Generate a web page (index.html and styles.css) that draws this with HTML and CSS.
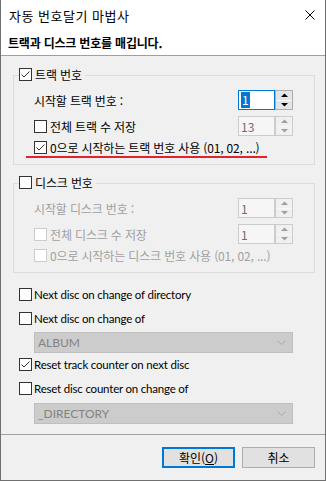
FILE: index.html
```html
<!DOCTYPE html>
<html lang="ko">
<head>
    <meta charset="UTF-8">
    <title>자동 번호달기 마법사</title>
    <link rel="stylesheet" href="styles.css">
</head>
<body>
<div class="window">
    <div class="titlebar">
        <span class="title">자동 번호달기 마법사</span>
        <svg class="close" width="10" height="10" viewBox="0 0 10 10"><path d="M0.5 0.5 L9.5 9.5 M9.5 0.5 L0.5 9.5" stroke="#000" stroke-width="1" fill="none"/></svg>
    </div>
    <div class="header">트랙과 디스크 번호를 매깁니다.</div>

    <div class="content">
        <div class="group">
            <div class="group-title">
                <span class="cb"><svg width="11" height="11" viewBox="0 0 11 11"><path d="M1.5 5.5 L4 8 L9.5 2.5" stroke="#333" fill="none"/></svg></span>트랙 번호
            </div>
            <div class="row first">
                <span>시작할 트랙 번호 :</span>
                <div class="spin focus">
                    <span class="spin-val"><span class="sel">1</span></span>
                    <span class="spin-btns">
                        <span class="spin-btn"><svg width="7" height="4" viewBox="0 0 7 4"><path d="M0 4 L3.5 0.5 L7 4 Z"/></svg></span>
                        <span class="spin-btn"><svg width="7" height="4" viewBox="0 0 7 4"><path d="M0 0 L3.5 3.5 L7 0 Z"/></svg></span>
                    </span>
                </div>
            </div>
            <div class="row">
                <span class="check"><span class="cb"></span>전체 트랙 수 저장</span>
                <div class="spin disabled">
                    <span class="spin-val">13</span>
                    <span class="spin-btns">
                        <span class="spin-btn"><svg width="7" height="4" viewBox="0 0 7 4"><path d="M0 4 L3.5 0.5 L7 4 Z"/></svg></span>
                        <span class="spin-btn"><svg width="7" height="4" viewBox="0 0 7 4"><path d="M0 0 L3.5 3.5 L7 0 Z"/></svg></span>
                    </span>
                </div>
            </div>
            <div class="row short">
                <span class="check"><span class="cb"><svg width="11" height="11" viewBox="0 0 11 11"><path d="M1.5 5.5 L4 8 L9.5 2.5" stroke="#333" fill="none"/></svg></span>0으로 시작하는 트랙 번호 사용 (01, 02, ...)</span>
            </div>
            <div class="mark"></div>
        </div>

        <div class="group second">
            <div class="group-title">
                <span class="cb"></span>디스크 번호
            </div>
            <div class="row first off">
                <span>시작할 디스크 번호 :</span>
                <div class="spin disabled">
                    <span class="spin-val">1</span>
                    <span class="spin-btns">
                        <span class="spin-btn"><svg width="7" height="4" viewBox="0 0 7 4"><path d="M0 4 L3.5 0.5 L7 4 Z"/></svg></span>
                        <span class="spin-btn"><svg width="7" height="4" viewBox="0 0 7 4"><path d="M0 0 L3.5 3.5 L7 0 Z"/></svg></span>
                    </span>
                </div>
            </div>
            <div class="row off">
                <span class="check"><span class="cb"></span>전체 디스크 수 저장</span>
                <div class="spin disabled">
                    <span class="spin-val">1</span>
                    <span class="spin-btns">
                        <span class="spin-btn"><svg width="7" height="4" viewBox="0 0 7 4"><path d="M0 4 L3.5 0.5 L7 4 Z"/></svg></span>
                        <span class="spin-btn"><svg width="7" height="4" viewBox="0 0 7 4"><path d="M0 0 L3.5 3.5 L7 0 Z"/></svg></span>
                    </span>
                </div>
            </div>
            <div class="row short off">
                <span class="check"><span class="cb"></span>0으로 시작하는 디스크 번호 사용 (01, 02, ...)</span>
            </div>
        </div>

        <div class="opt first"><span class="cb"></span>Next disc on change of directory</div>
        <div class="opt"><span class="cb"></span>Next disc on change of</div>
        <div class="combo">
            <span>ALBUM</span>
            <svg width="9" height="5" viewBox="0 0 9 5"><path d="M0.5 0.5 L4.5 4.5 L8.5 0.5" stroke="#a8a8a8" fill="none"/></svg>
        </div>
        <div class="opt near"><span class="cb"><svg width="11" height="11" viewBox="0 0 11 11"><path d="M1.5 5.5 L4 8 L9.5 2.5" stroke="#333" fill="none"/></svg></span>Reset track counter on next disc</div>
        <div class="opt"><span class="cb"></span>Reset disc counter on change of</div>
        <div class="combo low">
            <span>_DIRECTORY</span>
            <svg width="9" height="5" viewBox="0 0 9 5"><path d="M0.5 0.5 L4.5 4.5 L8.5 0.5" stroke="#a8a8a8" fill="none"/></svg>
        </div>
    </div>

    <div class="footer">
        <button class="btn default">확인(<u>O</u>)</button>
        <button class="btn">취소</button>
    </div>
</div>
</body>
</html>
```

FILE: styles.css
```css
* {
    box-sizing: border-box;
}

body {
    margin: 0;
    background-color: #fff;
    font-family: "Noto Sans CJK KR", sans-serif;
    font-size: 12px;
    color: #000;
}

.window {
    width: 326px;
    height: 481px;
    border: 1px solid #707070;
    border-top: 0;
    background-color: #f0f0f0;
    display: flex;
    flex-direction: column;
}

.titlebar {
    height: 30px;
    background-color: #fff;
    display: flex;
    align-items: center;
    justify-content: space-between;
    padding: 0 10px 0 8px;
}

.title {
    font-size: 13px;
    letter-spacing: 0.5px;
}

.header {
    height: 26px;
    background-color: #fff;
    border-bottom: 1px solid #a0a0a0;
    padding-left: 7px;
    line-height: 25px;
    font-weight: bold;
    letter-spacing: -0.2px;
}

.content {
    padding: 19px 10px 0 12px;
    letter-spacing: -0.15px;
}

.group {
    border: 1px solid #dcdcdc;
    padding: 0 21px 6px 20px;
}

.group.second {
    margin-top: 18px;
    padding-bottom: 10px;
}

.group-title {
    display: flex;
    align-items: center;
    width: max-content;
    height: 13px;
    margin: -8px 0 0 -15px;
    padding-right: 3px;
    background-color: #f0f0f0;
    white-space: nowrap;
}

.row {
    display: flex;
    align-items: center;
    justify-content: space-between;
    height: 20px;
    margin-top: 6px;
    white-space: nowrap;
}

.row.first {
    margin-top: 9px;
}

.row.short {
    height: 13px;
    margin-top: 5px;
}

.row.off {
    color: #a0a0a0;
}

.mark {
    width: 241px;
    height: 2px;
    margin: 2px 0 0 -8px;
    background-color: #e3222d;
}

.check {
    display: flex;
    align-items: center;
}

.cb {
    width: 13px;
    height: 13px;
    flex: none;
    border: 1px solid #333;
    background-color: #fff;
    margin-right: 3px;
    display: flex;
}

.off .cb {
    border-color: #cccccc;
}

.spin {
    display: flex;
    width: 55px;
    height: 20px;
    letter-spacing: 0;
}

.spin-val {
    flex: 1;
    display: flex;
    align-items: center;
    padding-left: 2px;
    border: 1px solid #7a7a7a;
    background-color: #fff;
}

.spin.focus .spin-val {
    border-color: #0078d7;
}

.sel {
    background-color: #0078d7;
    color: #fff;
    line-height: 16px;
    padding: 0 1px;
}

.spin-btns {
    width: 18px;
    display: flex;
    flex-direction: column;
    border: 1px solid #adadad;
    background-color: #fff;
}

.spin-btn {
    flex: 1;
    display: flex;
    align-items: center;
    justify-content: center;
    background-color: #e5e5e5;
}

.spin-btn + .spin-btn {
    border-top: 1px solid #f8f8f8;
}

.spin-btn svg {
    fill: #000;
}

.spin.disabled .spin-val {
    border-color: #cccccc;
    background-color: #f6f6f6;
    color: #6d6d6d;
}

.spin.disabled .spin-btns {
    border-color: #cccccc;
}

.spin.disabled .spin-btn {
    background-color: #f0f0f0;
}

.spin.disabled .spin-btn svg {
    fill: #a0a0a0;
}

.opt {
    display: flex;
    align-items: center;
    height: 13px;
    margin: 11px 0 0 6px;
    font-family: "Lato", sans-serif;
    font-size: 11.5px;
    letter-spacing: -0.2px;
    white-space: nowrap;
}

.opt.first {
    margin-top: 15px;
}

.opt.near {
    margin-top: 5px;
}

.opt .cb {
    margin-right: 2px;
}

.combo {
    width: 259px;
    height: 21px;
    margin: 7px 0 0 21px;
    padding: 0 6px 0 3px;
    border: 1px solid #bfbfbf;
    background-color: #cccccc;
    color: #838383;
    font-family: "Lato", sans-serif;
    letter-spacing: 0;
    display: flex;
    align-items: center;
    justify-content: space-between;
}

.combo.low {
    margin-top: 8px;
}

.footer {
    margin-top: auto;
    height: 46px;
    border-top: 1px solid #a0a0a0;
    padding: 12px 10px 0 0;
    display: flex;
    justify-content: flex-end;
    gap: 7px;
}

.btn {
    width: 73px;
    height: 21px;
    padding: 0;
    border: 1px solid #adadad;
    background-color: #e1e1e1;
    font-family: inherit;
    font-size: 12px;
    color: #000;
}

.btn.default {
    border: 2px solid #0078d7;
}
```
